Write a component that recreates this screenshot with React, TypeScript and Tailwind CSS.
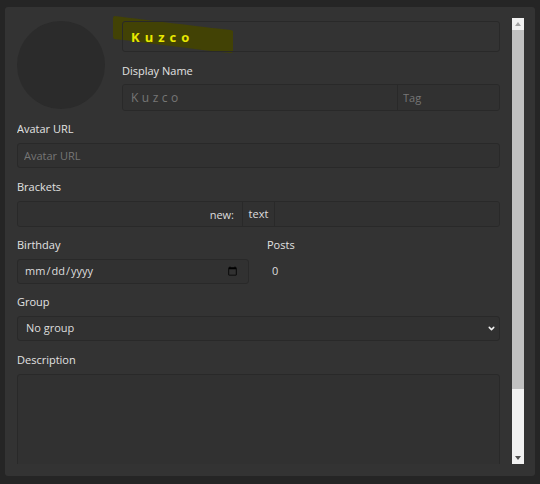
import { ChevronDown } from "lucide-react";

const font = { fontFamily: '"Open Sans", "Liberation Sans", sans-serif' };

const field =
  "block h-[25px] bg-[#313131] text-[11px] text-[#dddddd] placeholder:text-[#767676] outline-none";

function Label({ children }: { children: React.ReactNode }) {
  return (
    <div className="h-[14px] leading-[14px] text-[11px] text-[#e2e2e2] mb-[7px]">
      {children}
    </div>
  );
}

function Scrollbar() {
  return (
    <div className="w-3 h-full flex flex-col shrink-0">
      <div className="h-3 bg-[#f1f1f1] flex items-center justify-center">
        <svg width="6" height="4" viewBox="0 0 6 4">
          <polygon points="3,0 6,4 0,4" fill="#a3a3a3" />
        </svg>
      </div>
      <div className="h-[359px] bg-[#c1c1c1]" />
      <div className="flex-1 bg-[#f1f1f1]" />
      <div className="h-3 bg-[#f1f1f1] flex items-center justify-center">
        <svg width="6" height="4" viewBox="0 0 6 4">
          <polygon points="0,0 6,0 3,4" fill="#505050" />
        </svg>
      </div>
    </div>
  );
}

export default function App() {
  return (
    <div
      className="relative w-[540px] h-[484px] bg-[#252525] pt-[7px] px-[5px] pb-[8px]"
      style={font}
    >
      {/* marker highlight over the name */}
      <svg
        className="absolute left-0 top-0 pointer-events-none"
        width="540"
        height="60"
        viewBox="0 0 540 60"
      >
        <path
          d="M114,16 C150,20 200,27 231,30 L233,31 L233,52 L231,53 C190,49 150,43 114,39 L113,37 L113,18 Z"
          fill="#424205"
        />
      </svg>

      <div className="h-full bg-[#333333] rounded-[3px] flex pl-3 pr-[11px] pt-[11px] pb-3">
        <div className="flex-1 overflow-hidden pt-[3px] pr-3">
          {/* header */}
          <div className="flex gap-[17px]">
            <div className="w-[88px] h-[88px] rounded-full bg-[#2b2b2b] shrink-0" />
            <div className="flex-1 flex flex-col">
              <input
                defaultValue="Kuzco"
                className="relative z-10 h-[31px] bg-transparent border border-[#292929] rounded-[3px] pl-2 text-[13px] font-bold tracking-[5px] text-[#e8e800] outline-none"
              />
              <div className="mt-[12px] h-[14px] leading-[14px] text-[11px] text-[#e2e2e2]">
                Display Name
              </div>
              <div className="mt-[6px] flex border border-[#292929] rounded-[3px] overflow-hidden">
                <input
                  placeholder="Kuzco"
                  className={`${field} flex-1 min-w-0 pl-2 text-[12px] tracking-[3.5px] h-[23px]`}
                />
                <input
                  placeholder="Tag"
                  className={`${field} w-[102px] border-l border-[#292929] pl-[5px] h-[23px]`}
                />
              </div>
            </div>
          </div>

          <div className="mt-[11px]">
            <Label>Avatar URL</Label>
            <input
              placeholder="Avatar URL"
              className={`${field} w-full border border-[#292929] rounded-[3px] pl-[6px]`}
            />
          </div>

          <div className="mt-3">
            <Label>Brackets</Label>
            <div className="flex h-[26px] border border-[#292929] rounded-[3px] overflow-hidden">
              <input
                defaultValue="new:"
                className={`${field} h-full w-[224px] text-right pr-2`}
              />
              <span className="h-full w-[33px] border-x border-[#292929] bg-[#313131] flex items-center justify-center text-[11px] text-[#dddddd]">
                text
              </span>
              <input className={`${field} h-full flex-1 min-w-0`} />
            </div>
          </div>

          <div className="mt-[11px] flex gap-[18px]">
            <div className="w-[232px]">
              <Label>Birthday</Label>
              <input
                type="date"
                className={`${field} w-full border border-[#292929] rounded-[3px] pl-[6px] pr-[8px] [color-scheme:light]`}
              />
            </div>
            <div>
              <Label>Posts</Label>
              <div className="h-[25px] flex items-center pl-[5px] text-[11px] text-[#dddddd]">
                0
              </div>
            </div>
          </div>

          <div className="mt-[11px]">
            <Label>Group</Label>
            <div className="relative">
              <select
                className={`${field} w-full appearance-none border border-[#292929] rounded-[3px] pl-2`}
              >
                <option>No group</option>
              </select>
              <ChevronDown
                size={9}
                strokeWidth={4}
                color="#f0f0f0"
                className="absolute right-[4px] top-[8px] pointer-events-none"
              />
            </div>
          </div>

          <div className="mt-3">
            <Label>Description</Label>
            <textarea
              className={`${field} w-full h-[110px] resize-none border border-[#292929] rounded-[3px] p-[6px]`}
            />
          </div>
        </div>
        <Scrollbar />
      </div>
    </div>
  );
}
